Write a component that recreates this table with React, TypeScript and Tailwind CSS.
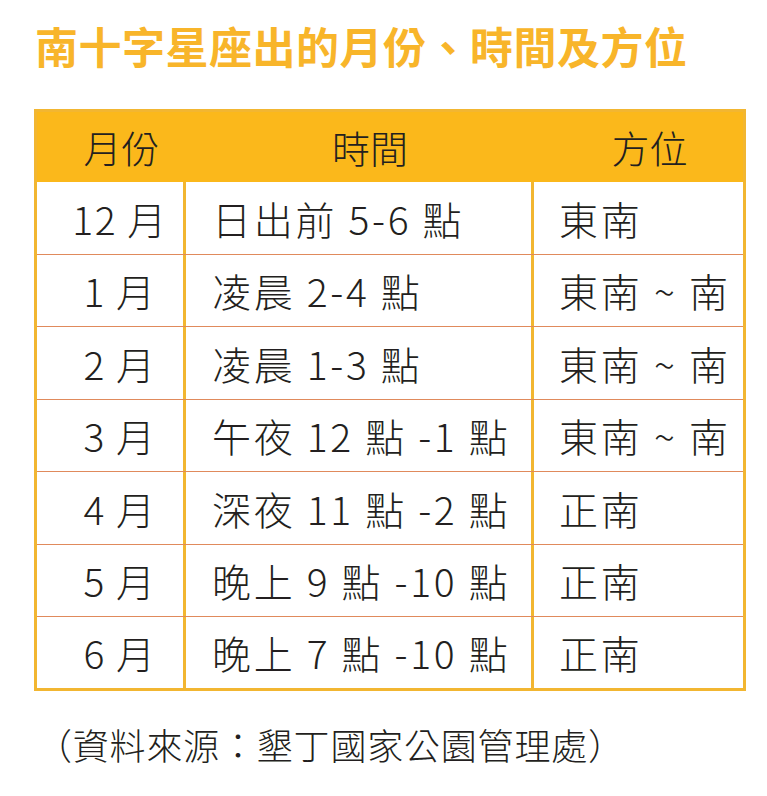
import React from "react";

const rows: { m: string; t: string; d: string; h: string }[] = [
  { m: "12 月", t: "日出前 5-6 點", d: "東南", h: "h-[73px]" },
  { m: "1 月", t: "凌晨 2-4 點", d: "東南 ~ 南", h: "h-[72px]" },
  { m: "2 月", t: "凌晨 1-3 點", d: "東南 ~ 南", h: "h-[73px]" },
  { m: "3 月", t: "午夜 12 點 -1 點", d: "東南 ~ 南", h: "h-[72px]" },
  { m: "4 月", t: "深夜 11 點 -2 點", d: "正南", h: "h-[73px]" },
  { m: "5 月", t: "晚上 9 點 -10 點", d: "正南", h: "h-[72px]" },
  { m: "6 月", t: "晚上 7 點 -10 點", d: "正南", h: "h-[71px]" },
];

export default function App() {
  return (
    <div
      className="w-[767px] h-[796px] bg-white pl-[34px] pt-[24px] text-[#231f20]"
      style={{ fontFamily: '"Noto Sans CJK TC", "Noto Sans", sans-serif' }}
    >
      <h1 className="text-[43px] leading-none font-bold tracking-[0.5px] text-[#f8b52a] pl-[1px] h-[85px]">
        南十字星座出的月份、時間及方位
      </h1>
      <div className="w-[712px] border-[3px] border-[#f2b631]">
        <div className="grid grid-cols-[149px_348px_209px] h-[70px] bg-[#fbb81b] text-[38px] leading-none font-light">
          <div className="flex items-center justify-center pl-[20px]">月份</div>
          <div className="flex items-center justify-center pl-[20px]">時間</div>
          <div className="flex items-center justify-center pl-[22px]">方位</div>
        </div>
        {rows.map((r, i) => (
          <div
            key={i}
            className={`grid grid-cols-[149px_348px_209px] ${r.h} text-[39px] leading-none font-light ${
              i < rows.length - 1 ? "border-b border-[#e08a5c]" : ""
            }`}
          >
            <div className="flex items-center justify-center pl-[20px] border-r-[3px] border-[#f2b631] tracking-[1.5px]">
              {r.m}
            </div>
            <div className="flex items-center pl-[26px] border-r-[3px] border-[#f2b631] tracking-[2.7px]">
              {r.t}
            </div>
            <div className="flex items-center pl-[25px] tracking-[2.8px]">{r.d}</div>
          </div>
        ))}
      </div>
      <div className="mt-[35px] text-[36px] leading-none font-light tracking-[0.8px] pl-[2px]">
        （資料來源：墾丁國家公園管理處）
      </div>
    </div>
  );
}
